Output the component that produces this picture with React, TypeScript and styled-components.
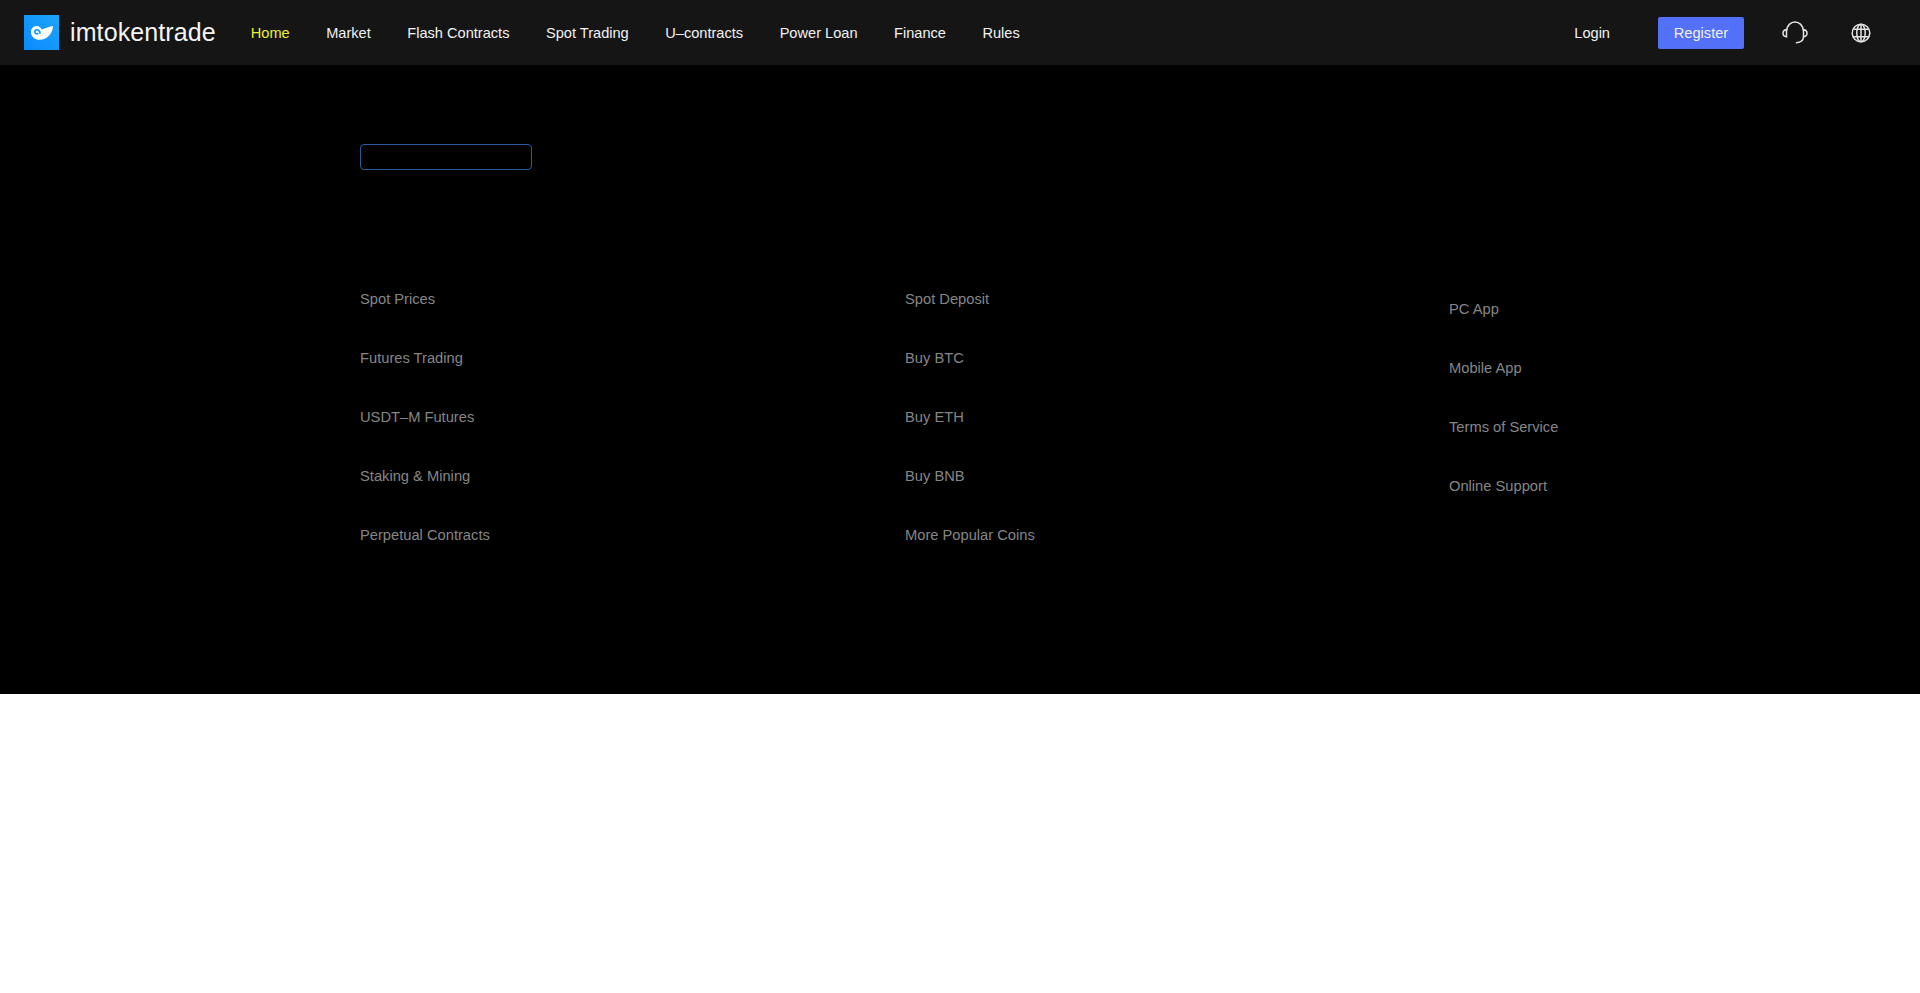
import React from 'react';
import styled, { createGlobalStyle } from 'styled-components';

const GlobalStyle = createGlobalStyle`
  html, body {
    margin: 0;
    padding: 0;
    background: #fff;
    font-family: "Liberation Sans", Arial, sans-serif;
  }
  * {
    box-sizing: border-box;
  }
`;

const Header = styled.header`
  height: 65px;
  background: #151515;
  display: flex;
  align-items: center;
  padding: 0 0 0 24px;
`;

const Brand = styled.a`
  display: flex;
  align-items: center;
  gap: 11px;
  margin-right: 35px;
  color: #f4f4f4;
  font-size: 25px;
  letter-spacing: 0.1px;
  line-height: 35px;
`;

const Nav = styled.nav`
  display: flex;
  gap: 36.5px;
  flex: 1;
`;

const NavLink = styled.a<{ $active?: boolean }>`
  color: ${props => (props.$active ? '#eeee33' : '#f2f2f2')};
  font-size: 14.6px;
  white-space: nowrap;
`;

const HeaderRight = styled.div`
  display: flex;
  align-items: center;
  padding-right: 46px;
`;

const Login = styled.a`
  color: #f2f2f2;
  font-size: 14.6px;
  margin-right: 48px;
`;

const RegisterButton = styled.button`
  width: 86px;
  height: 32px;
  border: 0;
  border-radius: 2px;
  background: #5270f8;
  color: #f2f2f2;
  font-family: inherit;
  font-size: 14.6px;
  margin-right: 38px;
  padding: 0;
`;

const IconButton = styled.span`
  display: flex;
  width: 26px;
  height: 26px;
  color: #e4e4e4;
  & + & {
    margin-left: 40px;
  }
`;

const Footer = styled.footer`
  height: 629px;
  background: #000;
  padding: 79px 360px 0;
`;

const SearchBox = styled.div`
  width: 172px;
  height: 26px;
  border: 1px solid #2a5aa0;
  border-radius: 4px;
`;

const Columns = styled.div`
  display: grid;
  grid-template-columns: 545px 544px 1fr;
  margin-top: 120px;
`;

const Column = styled.ul<{ $offset?: boolean }>`
  list-style: none;
  margin: 0;
  padding: ${props => (props.$offset ? '10px' : '0')} 0 0;
  display: flex;
  flex-direction: column;
  gap: 41px;
`;

const FooterLink = styled.li`
  color: #868686;
  font-size: 14.7px;
  line-height: 18px;
  white-space: nowrap;
`;

const Blank = styled.div`
  height: 299px;
  background: #fff;
`;

const navItems = ['Market', 'Flash Contracts', 'Spot Trading', 'U–contracts', 'Power Loan', 'Finance', 'Rules'];

const columns = [
  { links: ['Spot Prices', 'Futures Trading', 'USDT–M Futures', 'Staking & Mining', 'Perpetual Contracts'] },
  { links: ['Spot Deposit', 'Buy BTC', 'Buy ETH', 'Buy BNB', 'More Popular Coins'] },
  { links: ['PC App', 'Mobile App', 'Terms of Service', 'Online Support'], offset: true },
];

const Logo = () => (
  <svg width="35" height="35" viewBox="0 0 35 35">
    <defs>
      <linearGradient id="logoBg" x1="1" y1="0" x2="0" y2="1">
        <stop offset="0" stopColor="#1ca6f8" />
        <stop offset="1" stopColor="#0a8aff" />
      </linearGradient>
    </defs>
    <rect width="35" height="35" fill="url(#logoBg)" />
    <path
      d="M29 11C28.800 18.500 23 24.800 15.500 24.800C10.500 24.800 7 21.500 7 17C7 13.500 9.500 11 12.500 11C15 11 16.800 12.400 17.600 14.600C20.500 14 24.500 11.500 29 11Z"
      fill="#fff"
    />
    <path
      d="M13.800 18.500C12.500 19.400 10.800 18.500 10.800 16.800C10.800 15.200 12.500 14.300 14 15C15.300 15.600 16 16.800 16 18"
      fill="none"
      stroke="#1098fb"
      strokeWidth="1.700"
      strokeLinecap="round"
    />
  </svg>
);

const HeadsetIcon = () => (
  <svg width="26" height="26" viewBox="0 0 26 26" fill="none" stroke="currentColor" strokeWidth="1.500">
    <path d="M4.800 10.500C5 5.500 8.500 2 13 2s8 3.500 8.200 8.500" />
    <path d="M4.500 9.500C2.200 10 1 11.200 1 13.200s1.200 3.300 3.500 3.600z" />
    <path d="M21.500 9.500c2.300.5 3.500 1.700 3.500 3.700s-1.200 3.300-3.500 3.600z" />
    <path d="M21.500 17c-.2 3.200-2 5.200-7 5.800" strokeLinecap="round" />
  </svg>
);

const GlobeIcon = () => (
  <svg width="26" height="26" viewBox="0 0 26 26" fill="none" stroke="currentColor" strokeWidth="1.500">
    <circle cx="13" cy="13" r="8.800" />
    <ellipse cx="13" cy="13" rx="4.200" ry="8.800" />
    <path d="M5.200 9.200h15.600M5.200 16.800h15.600M13 4.200v17.600" />
  </svg>
);

export default function App() {
  return (
    <>
      <GlobalStyle />
      <Header>
        <Brand>
          <Logo />
          imtokentrade
        </Brand>
        <Nav>
          <NavLink $active>Home</NavLink>
          {navItems.map(item => (
            <NavLink key={item}>{item}</NavLink>
          ))}
        </Nav>
        <HeaderRight>
          <Login>Login</Login>
          <RegisterButton>Register</RegisterButton>
          <IconButton>
            <HeadsetIcon />
          </IconButton>
          <IconButton>
            <GlobeIcon />
          </IconButton>
        </HeaderRight>
      </Header>
      <Footer>
        <SearchBox />
        <Columns>
          {columns.map(column => (
            <Column key={column.links[0]} $offset={column.offset}>
              {column.links.map(link => (
                <FooterLink key={link}>{link}</FooterLink>
              ))}
            </Column>
          ))}
        </Columns>
      </Footer>
      <Blank />
    </>
  );
}
